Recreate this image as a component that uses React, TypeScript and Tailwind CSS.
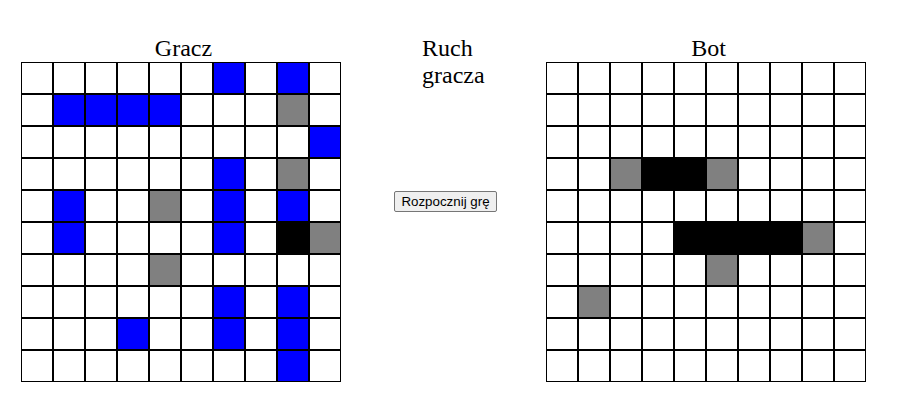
import React from "react";

type C = "w" | "b" | "g" | "k";

const player: string[] = [
  "wwwwwwbwbw",
  "wbbbbwwwgw",
  "wwwwwwwwwb",
  "wwwwwwbwgw",
  "wbwwgwbwbw",
  "wbwwwwbwkg",
  "wwwwgwwwww",
  "wwwwwwbwbw",
  "wwwbwwbwbw",
  "wwwwwwwwbw",
];

const bot: string[] = [
  "wwwwwwwwww",
  "wwwwwwwwww",
  "wwwwwwwwww",
  "wwgkkgwwww",
  "wwwwwwwwww",
  "wwwwkkkkgw",
  "wwwwwgwwww",
  "wgwwwwwwww",
  "wwwwwwwwww",
  "wwwwwwwwww",
];

function cellClass(c: C) {
  if (c === "b") return "bg-[#0000ff]";
  if (c === "g") return "bg-[#808080]";
  if (c === "k") return "bg-black";
  return "bg-white";
}

function Board({ rows }: { rows: string[] }) {
  return (
    <div className="grid grid-cols-[repeat(10,32px)] w-[320px]">
      {rows.flatMap((r, i) =>
        r.split("").map((c, j) => (
          <div
            key={`${i}-${j}`}
            className={`w-[32px] h-[32px] border border-black box-border ${cellClass(c as C)}`}
          />
        ))
      )}
    </div>
  );
}

export default function App() {
  return (
    <div
      className="w-[900px] h-[419px] bg-white text-black flex flex-row items-start pl-[21px] pt-[35px]"
      style={{ fontFamily: '"Liberation Serif", "Times New Roman", serif' }}
    >
      <div className="w-[325px] flex flex-col">
        <h2 className="text-[24px] leading-[27px] text-center w-[325px]">Gracz</h2>
        <Board rows={player} />
      </div>
      <div className="w-[103px] ml-[48px] flex flex-col">
        <h2 className="text-[24px] leading-[27px] ml-[28px] w-[70px]">Ruch gracza</h2>
        <button
          className="mt-[102px] w-[103px] h-[21px] bg-[#efefef] border border-[#767676] rounded-[2px] text-[13.33px] leading-[15px] text-black flex items-center justify-center whitespace-nowrap"
          style={{ fontFamily: '"Liberation Sans", Arial, sans-serif' }}
        >
          Rozpocznij grę
        </button>
      </div>
      <div className="w-[325px] ml-[49px] flex flex-col">
        <h2 className="text-[24px] leading-[27px] text-center w-[325px]">Bot</h2>
        <Board rows={bot} />
      </div>
    </div>
  );
}
